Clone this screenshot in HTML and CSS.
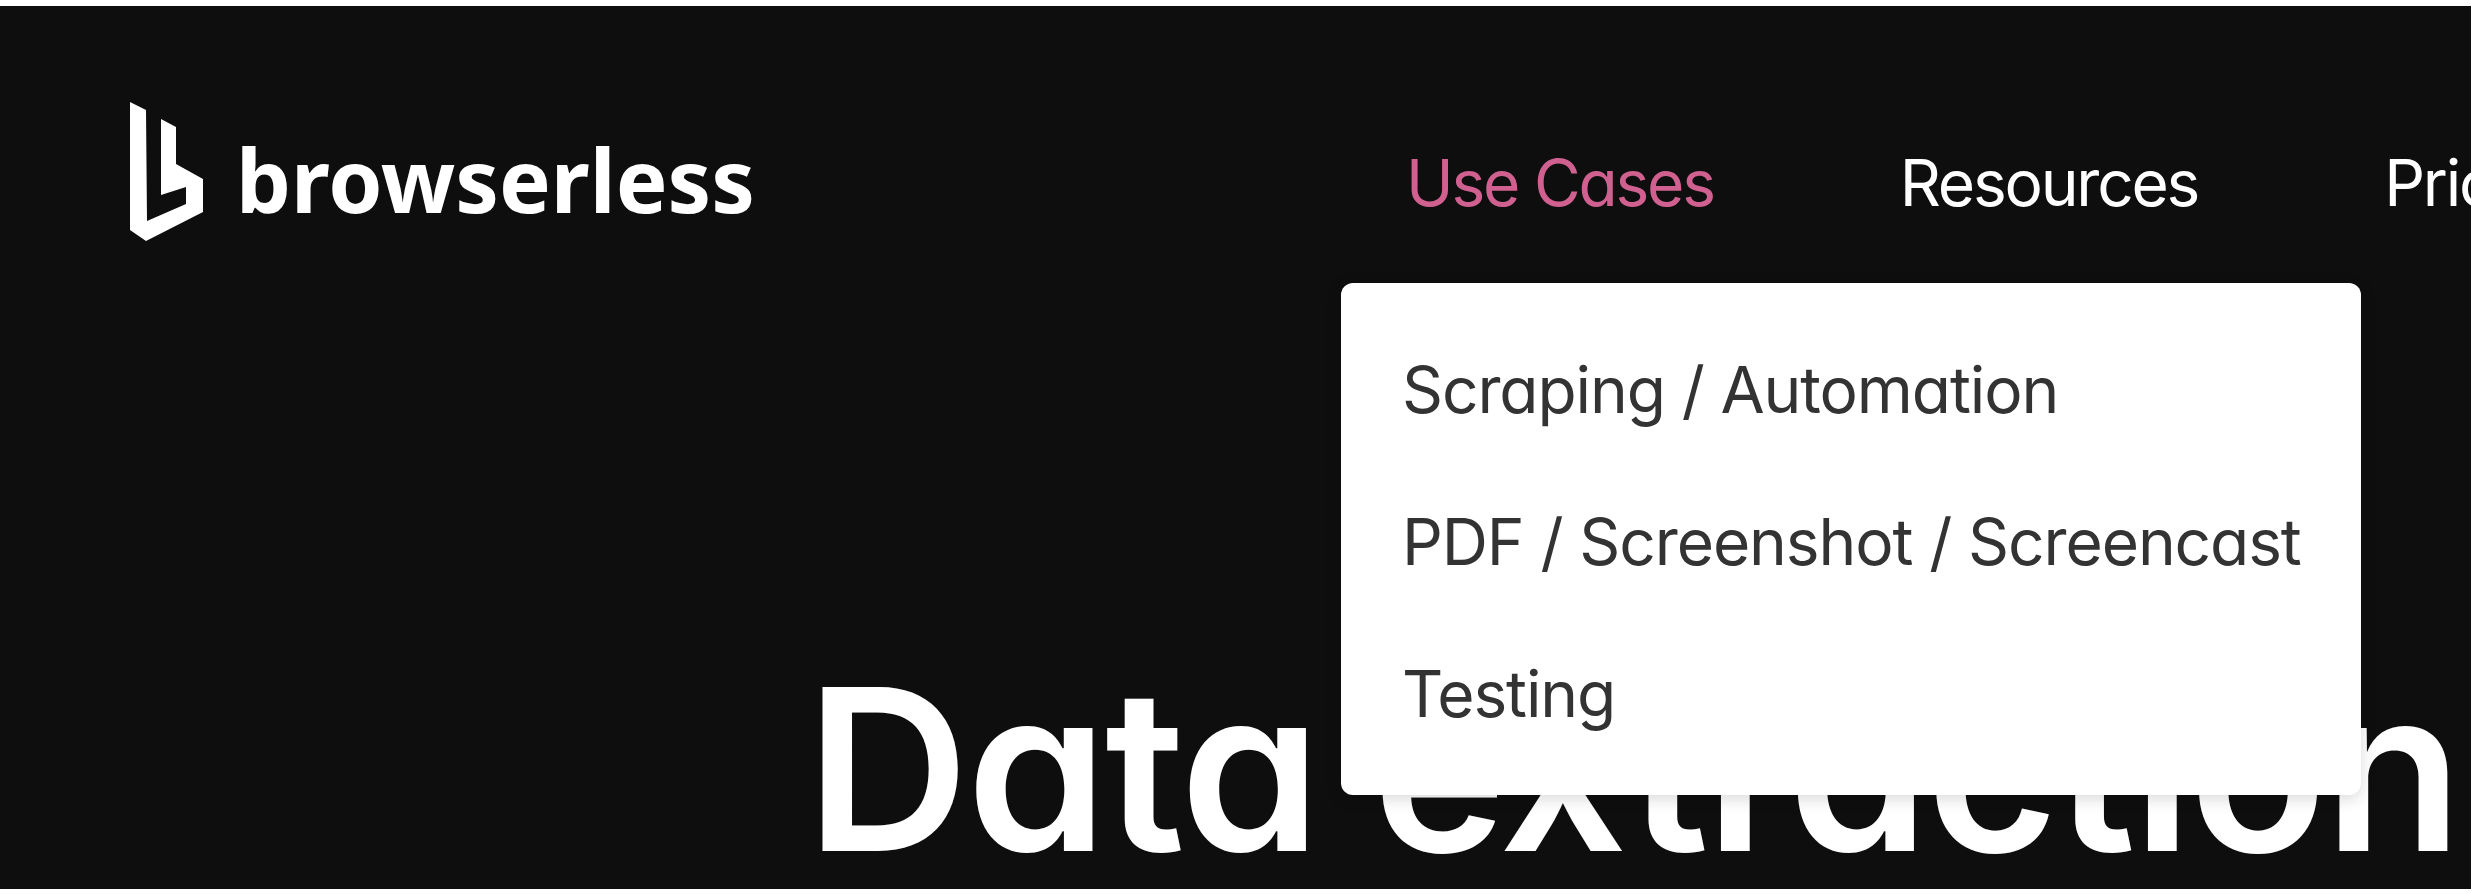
FILE: index.html
```html
<!DOCTYPE html>
<html lang="en">

<head>
    <meta charset="UTF-8">
    <meta name="viewport" content="width=device-width, initial-scale=1.0">
    <title>browserless</title>
    <link rel="stylesheet" href="styles.css">
</head>

<body>

    <div class="page">
        <header class="header">
            <a class="logo" href="#">
                <svg class="logo-icon" viewBox="0 0 73 140" width="73" height="140">
                    <path fill="#fff" d="M0 0 16 8 17 119 56 102V85L31 93V17L46 25V62L73 77V110L16 139 0 128Z" />
                </svg>
                <span class="logo-text">browserless</span>
            </a>
            <nav class="nav">
                <div class="nav-item">
                    <a class="nav-link active" href="#">Use Cases</a>
                    <div class="dropdown">
                        <a href="#">Scraping / Automation</a>
                        <a href="#">PDF / Screenshot / Screencast</a>
                        <a href="#">Testing</a>
                    </div>
                </div>
                <div class="nav-item"><a class="nav-link" href="#">Resources</a></div>
                <div class="nav-item"><a class="nav-link" href="#">Pricing</a></div>
            </nav>
        </header>

        <h1 class="hero-title">Data extraction</h1>
    </div>

</body>

</html>
```

FILE: styles.css
```css
html,
body {
    margin: 0;
    height: 100%;
    overflow: hidden;
    background: #fff;
}

body {
    font-family: Inter, Arial, sans-serif;
    font-feature-settings: "cv11";
    color: #fff;
}

a {
    color: inherit;
    text-decoration: none;
}

.page {
    margin-top: 6px;
    height: 883px;
    width: 2471px;
    background: #0e0e0e;
    overflow: hidden;
}

.header {
    display: flex;
    align-items: flex-start;
    padding: 96px 0 0 130px;
    height: 230px;
    box-sizing: border-box;
}

.logo {
    display: flex;
    align-items: center;
    gap: 33px;
    width: 1276px;
    flex-shrink: 0;
}

.logo-text {
    font-family: "Noto Sans", sans-serif;
    font-weight: 700;
    font-size: 87px;
    margin-top: 14px;
}

.nav {
    display: flex;
    gap: 186px;
    flex-shrink: 0;
}

.nav-item {
    position: relative;
}

.nav-link {
    display: block;
    font-size: 64px;
    letter-spacing: -2.2px;
    line-height: 72px;
    margin-top: 45px;
    white-space: nowrap;
    font-weight: 400;
}

.nav-link.active {
    color: #d0608f;
}

.dropdown {
    position: absolute;
    top: 181px;
    left: -65px;
    width: 1020px;
    height: 512px;
    box-sizing: border-box;
    padding: 31px 0 0 61px;
    background: #fff;
    border-radius: 12px;
    box-shadow: 0 4px 16px rgba(0, 0, 0, 0.15);
    color: #333;
    z-index: 2;
}

.dropdown a {
    display: block;
    font-size: 64px;
    letter-spacing: -1.1px;
    line-height: 152px;
    white-space: nowrap;
}

.hero-title {
    margin: 420px 0 0 806px;
    font-size: 226px;
    font-weight: 600;
    letter-spacing: -2.6px;
    line-height: 1;
    white-space: nowrap;
}
```
